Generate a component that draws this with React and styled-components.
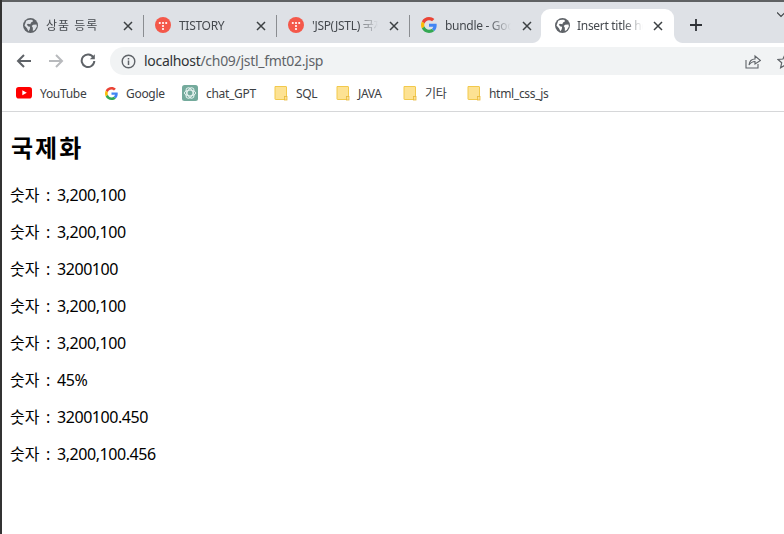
import React from 'react';
import styled, { createGlobalStyle } from 'styled-components';

const Global = createGlobalStyle`
  html, body { margin: 0; padding: 0; background: #fff; overflow: hidden; }
  body { font-family: "Noto Sans", "Noto Sans CJK KR", sans-serif; color: #000; }
`;
const Shell = styled.div`
  width: 784px; height: 534px; box-sizing: border-box; border-left: 2px solid #333;
  display: flex; flex-direction: column; background: #fff; overflow: hidden;
`;
const TabStrip = styled.div`
  position: relative; height: 43px; box-sizing: border-box; flex: none;
  background: #dee1e6; border-top: 2px solid #5f6163; padding: 7px 0 0 9px;
  display: flex; align-items: stretch;
  &::before { content: ""; position: absolute; left: -2px; top: -2px; width: 2px; height: 32px; background: #77797b; }
`;
const Tab = styled.div`
  position: relative; width: 133px; flex: none; box-sizing: border-box;
  margin-left: ${p => (p.$active ? '-2px' : '0')};
  padding: 0 8px 0 ${p => (p.$active ? '13px' : '11px')}; display: flex; align-items: center;
  gap: ${p => (p.$active ? '7px' : '8px')};
  background: ${p => (p.$active ? '#fff' : 'transparent')};
  border-radius: ${p => (p.$active ? '9px 9px 0 0' : '0')};
  &::after {
    content: ""; position: absolute; right: 0; top: 6px; bottom: 6px; width: 1px;
    background: ${p => (p.$sep ? '#8a8d91' : 'transparent')};
  }
  ${p => p.$active && `
    &::before {
      content: ""; position: absolute; left: -9px; bottom: 0; width: 9px; height: 9px;
      background: radial-gradient(circle at 0 0, #dee1e6 8.5px, #fff 9.5px);
    }
    & > i {
      position: absolute; right: -9px; bottom: 0; width: 9px; height: 9px;
      background: radial-gradient(circle at 100% 0, #dee1e6 8.5px, #fff 9.5px);
    }
  `}
`;
const Favicon = styled.span`
  width: 16px; height: 16px; flex: none; display: flex; align-items: center; justify-content: center;
  margin-bottom: 2px;
`;
const TabTitle = styled.span`
  flex: 1; min-width: 0; overflow: hidden; white-space: nowrap; font-size: 12px; color: #45494e;
  margin-bottom: 2px;
  letter-spacing: ${p => (p.$track === undefined ? -0.3 : p.$track)}px;
  -webkit-mask-image: linear-gradient(to right, #000 ${p => p.$fade || 100}%, transparent);
  mask-image: linear-gradient(to right, #000 ${p => p.$fade || 100}%, transparent);
`;
const Close = styled.span`
  width: 16px; height: 16px; flex: none; display: flex; align-items: center; justify-content: center;
`;
const NewTab = styled.span`
  width: 26px; height: 26px; margin: 3px 0 0 9px; display: flex; align-items: center; justify-content: center;
`;
const Spacer = styled.span`flex: 1;`;
const Chevron = styled.span`
  position: absolute; right: -1px; top: 10px; width: 8px; height: 6px; display: flex;
`;
const Toolbar = styled.div`
  height: 36px; flex: none; box-sizing: border-box; padding: 4px 0 4px 0; display: flex; align-items: center; background: #fff;
`;
const NavButton = styled.span`
  width: 24px; height: 24px; margin-left: ${p => p.$ml || 0}px; flex: none; display: flex; align-items: center; justify-content: center;
`;
const Omnibox = styled.div`
  flex: 1; height: 28px; margin-left: 10px; margin-right: -20px; border-radius: 14px 0 0 14px; background: #f1f3f4;
  display: flex; align-items: center; padding: 0 10px 0 9px;
`;
const Url = styled.span`
  font-size: 14px; color: #5f6368; margin: 0 0 2px 7px; letter-spacing: -0.3px; white-space: nowrap;
  b { font-weight: 400; color: #303336; }
`;
const OmniIcon = styled.span`
  width: 18px; height: 18px; display: flex; align-items: center; justify-content: center; flex: none;
  margin-left: ${p => p.$ml || 0}px;
`;
const Bookmarks = styled.div`
  height: 33px; flex: none; box-sizing: border-box; border-bottom: 1px solid #d6d7d9; padding: 0 0 4px 14px;
  display: flex; align-items: center; background: #fff;
`;
const Mark = styled.div`
  width: ${p => p.$w}px; flex: none; display: flex; align-items: center; gap: ${p => p.$gap || 8}px;
  font-size: 12px; letter-spacing: -0.3px; color: #3c4043; white-space: nowrap;
`;
const MarkIcon = styled.span`
  width: ${p => p.$w || 16}px; height: 16px; display: flex; align-items: center; justify-content: center; flex: none;
`;
const Page = styled.main`
  flex: 1; padding: 19px 8px 0 8px;
`;
const Heading = styled.h1`
  margin: 0 0 21px 1px; font-size: 24px; line-height: 32px; font-weight: 700; letter-spacing: 2px;
  font-family: "Noto Sans CJK KR", sans-serif;
`;
const Line = styled.p`
  margin: 0 0 15px; font-size: 16px; line-height: 22px; color: #000; white-space: nowrap;
  word-spacing: 2.5px;
`;
const Num = styled.span`
  letter-spacing: -0.45px;
`;

const Globe = ({ bg = '#dee1e6' }) => (
  <svg width="15" height="15" viewBox="0 0 16 16">
    <circle cx="8" cy="8" r="8" fill="#5f6368" />
    <path d="M3.500 2.800 C5.500 1.800 7.500 1.600 10 2 L10.800 3.400 L8.600 4.800 L7.800 6.600 L5.200 6.200 L4 7.200 L5.800 9 L7.600 9.300 L7.200 12 L5.800 14.200 L4.200 11 L1.600 8 Z" fill={bg} />
    <path d="M10.800 7.200 L14.400 6.800 L14.800 9 L12.600 12.800 L10.500 13.800 L10.500 10.400 L9.300 8.600 Z" fill={bg} />
  </svg>
);
const Tistory = () => (
  <svg width="16" height="16" viewBox="0 0 16 16">
    <circle cx="8" cy="8" r="8" fill="#f4584a" />
    <g fill="#fff">
      <circle cx="4.800" cy="6" r="1.100" /><circle cx="8" cy="6" r="1.100" /><circle cx="11.200" cy="6" r="1.100" />
      <circle cx="8" cy="9" r="1.100" /><circle cx="8" cy="12" r="1.100" />
    </g>
  </svg>
);
const GoogleG = ({ size = 16 }) => (
  <svg width={size} height={size} viewBox="0 0 48 48">
    <path fill="#EA4335" d="M24 9.500c3.500 0 6.700 1.200 9.200 3.600l6.900-6.900C35.900 2.400 30.500 0 24 0 14.600 0 6.500 5.400 2.600 13.200l8 6.200C12.500 13.700 17.800 9.500 24 9.500z" />
    <path fill="#4285F4" d="M47 24.500c0-1.600-.1-3.100-.4-4.500H24v9h12.900c-.6 3-2.200 5.500-4.700 7.200l7.700 6C44.400 38 47 31.800 47 24.500z" />
    <path fill="#FBBC05" d="M10.600 28.600c-.5-1.400-.8-3-.8-4.600s.3-3.200.8-4.600l-8-6.200C.9 16.500 0 20.100 0 24s.9 7.500 2.600 10.800l8-6.200z" />
    <path fill="#34A853" d="M24 48c6.500 0 11.900-2.100 15.900-5.800l-7.700-6c-2.200 1.500-5 2.300-8.200 2.300-6.200 0-11.500-4.200-13.400-9.900l-8 6.200C6.500 42.600 14.600 48 24 48z" />
  </svg>
);
const X = ({ c = '#3c4043' }) => (
  <svg width="10" height="10" viewBox="0 0 10 10"><path d="M1 1 L9 9 M9 1 L1 9" stroke={c} strokeWidth="1.500" fill="none" /></svg>
);
const Folder = () => (
  <svg width="14" height="16" viewBox="0 0 14 16">
    <path d="M1 1.500 H12 a.5.5 0 0 1 .5.5 V14.500 H1.500 a.5.5 0 0 1 -.5-.5 Z" fill="#fde293" stroke="#f2c94c" strokeWidth="1" />
    <rect x="10.500" y="11.500" width="2.500" height="3.500" fill="#fde293" stroke="#e8b93c" strokeWidth="0.800" />
  </svg>
);
const YouTube = () => (
  <svg width="16" height="12" viewBox="0 0 16 12">
    <rect width="16" height="11.500" rx="2.800" fill="#f00" />
    <path d="M6.300 3.200 L10.800 5.750 L6.300 8.300 Z" fill="#fff" />
  </svg>
);
const ChatGPT = () => (
  <svg width="16" height="16" viewBox="0 0 16 16">
    <rect width="16" height="16" rx="2.500" fill="#74aa9c" />
    <g fill="none" stroke="#e6f2ef" strokeWidth="1">
      <ellipse cx="8" cy="8" rx="5.600" ry="2.900" />
      <ellipse cx="8" cy="8" rx="5.600" ry="2.900" transform="rotate(60 8 8)" />
      <ellipse cx="8" cy="8" rx="5.600" ry="2.900" transform="rotate(120 8 8)" />
    </g>
  </svg>
);

const bookmarks = [
  { w: 88, icon: <YouTube />, label: 'YouTube' },
  { w: 78, icon: <GoogleG size={13} />, label: 'Google', iw: 14 },
  { w: 92, icon: <ChatGPT />, label: 'chat_GPT' },
  { w: 62, icon: <Folder />, label: 'SQL', iw: 14 },
  { w: 67, icon: <Folder />, label: 'JAVA', iw: 14 },
  { w: 64, icon: <Folder />, label: '기타', iw: 14 },
  { w: 90, icon: <Folder />, label: 'html_css_js', iw: 14 },
];
const lines = ['3,200,100', '3,200,100', '3200100', '3,200,100', '3,200,100', '45%', '3200100.450', '3,200,100.456'];

export default function App() {
  return (
    <Shell>
      <Global />
      <TabStrip>
        <Tab $sep><Favicon><Globe /></Favicon><TabTitle $track={1}>상품 등록</TabTitle><Close><X /></Close></Tab>
        <Tab $sep><Favicon><Tistory /></Favicon><TabTitle>TISTORY</TabTitle><Close><X /></Close></Tab>
        <Tab $sep><Favicon><Tistory /></Favicon><TabTitle $fade={70}>'JSP(JSTL) 국제화 태그</TabTitle><Close><X /></Close></Tab>
        <Tab><Favicon><GoogleG /></Favicon><TabTitle $fade={65}>bundle - Google 검색</TabTitle><Close><X /></Close></Tab>
        <Tab $active><Favicon><Globe bg="#fff" /></Favicon><TabTitle $fade={70}>Insert title here</TabTitle><Close><X /></Close><i /></Tab>
        <NewTab>
          <svg width="14" height="14" viewBox="0 0 14 14"><path d="M7 1 V13 M1 7 H13" stroke="#2f3237" strokeWidth="1.800" /></svg>
        </NewTab>
        <Spacer />
        <Chevron>
          <svg width="8" height="6" viewBox="0 0 8 6"><path d="M0 0.500 L4 4.500 L8 0.500" stroke="#3c4043" strokeWidth="1.200" fill="none" /></svg>
        </Chevron>
      </TabStrip>
      <Toolbar>
        <NavButton $ml={10}>
          <svg width="16" height="16" viewBox="0 0 16 16"><path d="M15 8 H2 M8 2 L2 8 L8 14" stroke="#5f6368" strokeWidth="2" fill="none" /></svg>
        </NavButton>
        <NavButton $ml={8}>
          <svg width="16" height="16" viewBox="0 0 16 16"><path d="M1 8 H14 M8 2 L14 8 L8 14" stroke="#b8babd" strokeWidth="2" fill="none" /></svg>
        </NavButton>
        <NavButton $ml={8}>
          <svg width="16" height="16" viewBox="0 0 16 16"><path d="M13.400 4.500 A6.300 6.300 0 1 0 14.300 8" stroke="#5f6368" strokeWidth="2" fill="none" /><path d="M14.800 1.200 V6.200 H9.800 Z" fill="#5f6368" /></svg>
        </NavButton>
        <Omnibox>
          <OmniIcon>
            <svg width="15" height="15" viewBox="0 0 15 15"><circle cx="7.500" cy="7.500" r="6.300" stroke="#5f6368" strokeWidth="1.400" fill="none" /><path d="M7.500 6.600 V11 M7.500 4 V5.400" stroke="#5f6368" strokeWidth="1.500" /></svg>
          </OmniIcon>
          <Url><b>localhost</b>/ch09/jstl_fmt02.jsp</Url>
          <Spacer />
          <OmniIcon>
            <svg width="16" height="16" viewBox="0 0 16 16"><path d="M1 7 V15 H13 V11" stroke="#5f6368" strokeWidth="1.100" fill="none" /><path d="M4 12 C4.500 8 7 6 10 6 V3 L15.500 7.500 L10 11 V8.500 C7.500 8.500 5.500 9.800 4 12 Z" stroke="#5f6368" strokeWidth="1.100" fill="none" /></svg>
          </OmniIcon>
          <OmniIcon $ml={14}>
            <svg width="16" height="16" viewBox="0 0 16 16"><path d="M8 1.500 L10 6 L15 6.500 L11.300 9.800 L12.400 14.700 L8 12.100 L3.600 14.700 L4.700 9.800 L1 6.500 L6 6 Z" stroke="#5f6368" strokeWidth="1.200" fill="none" /></svg>
          </OmniIcon>
        </Omnibox>
      </Toolbar>
      <Bookmarks>
        {bookmarks.map(b => (
          <Mark key={b.label} $w={b.w}>
            <MarkIcon $w={b.iw}>{b.icon}</MarkIcon>
            {b.label}
          </Mark>
        ))}
      </Bookmarks>
      <Page>
        <Heading>국제화</Heading>
        {lines.map((l, i) => <Line key={i}>숫자 : <Num>{l}</Num></Line>)}
      </Page>
    </Shell>
  );
}
